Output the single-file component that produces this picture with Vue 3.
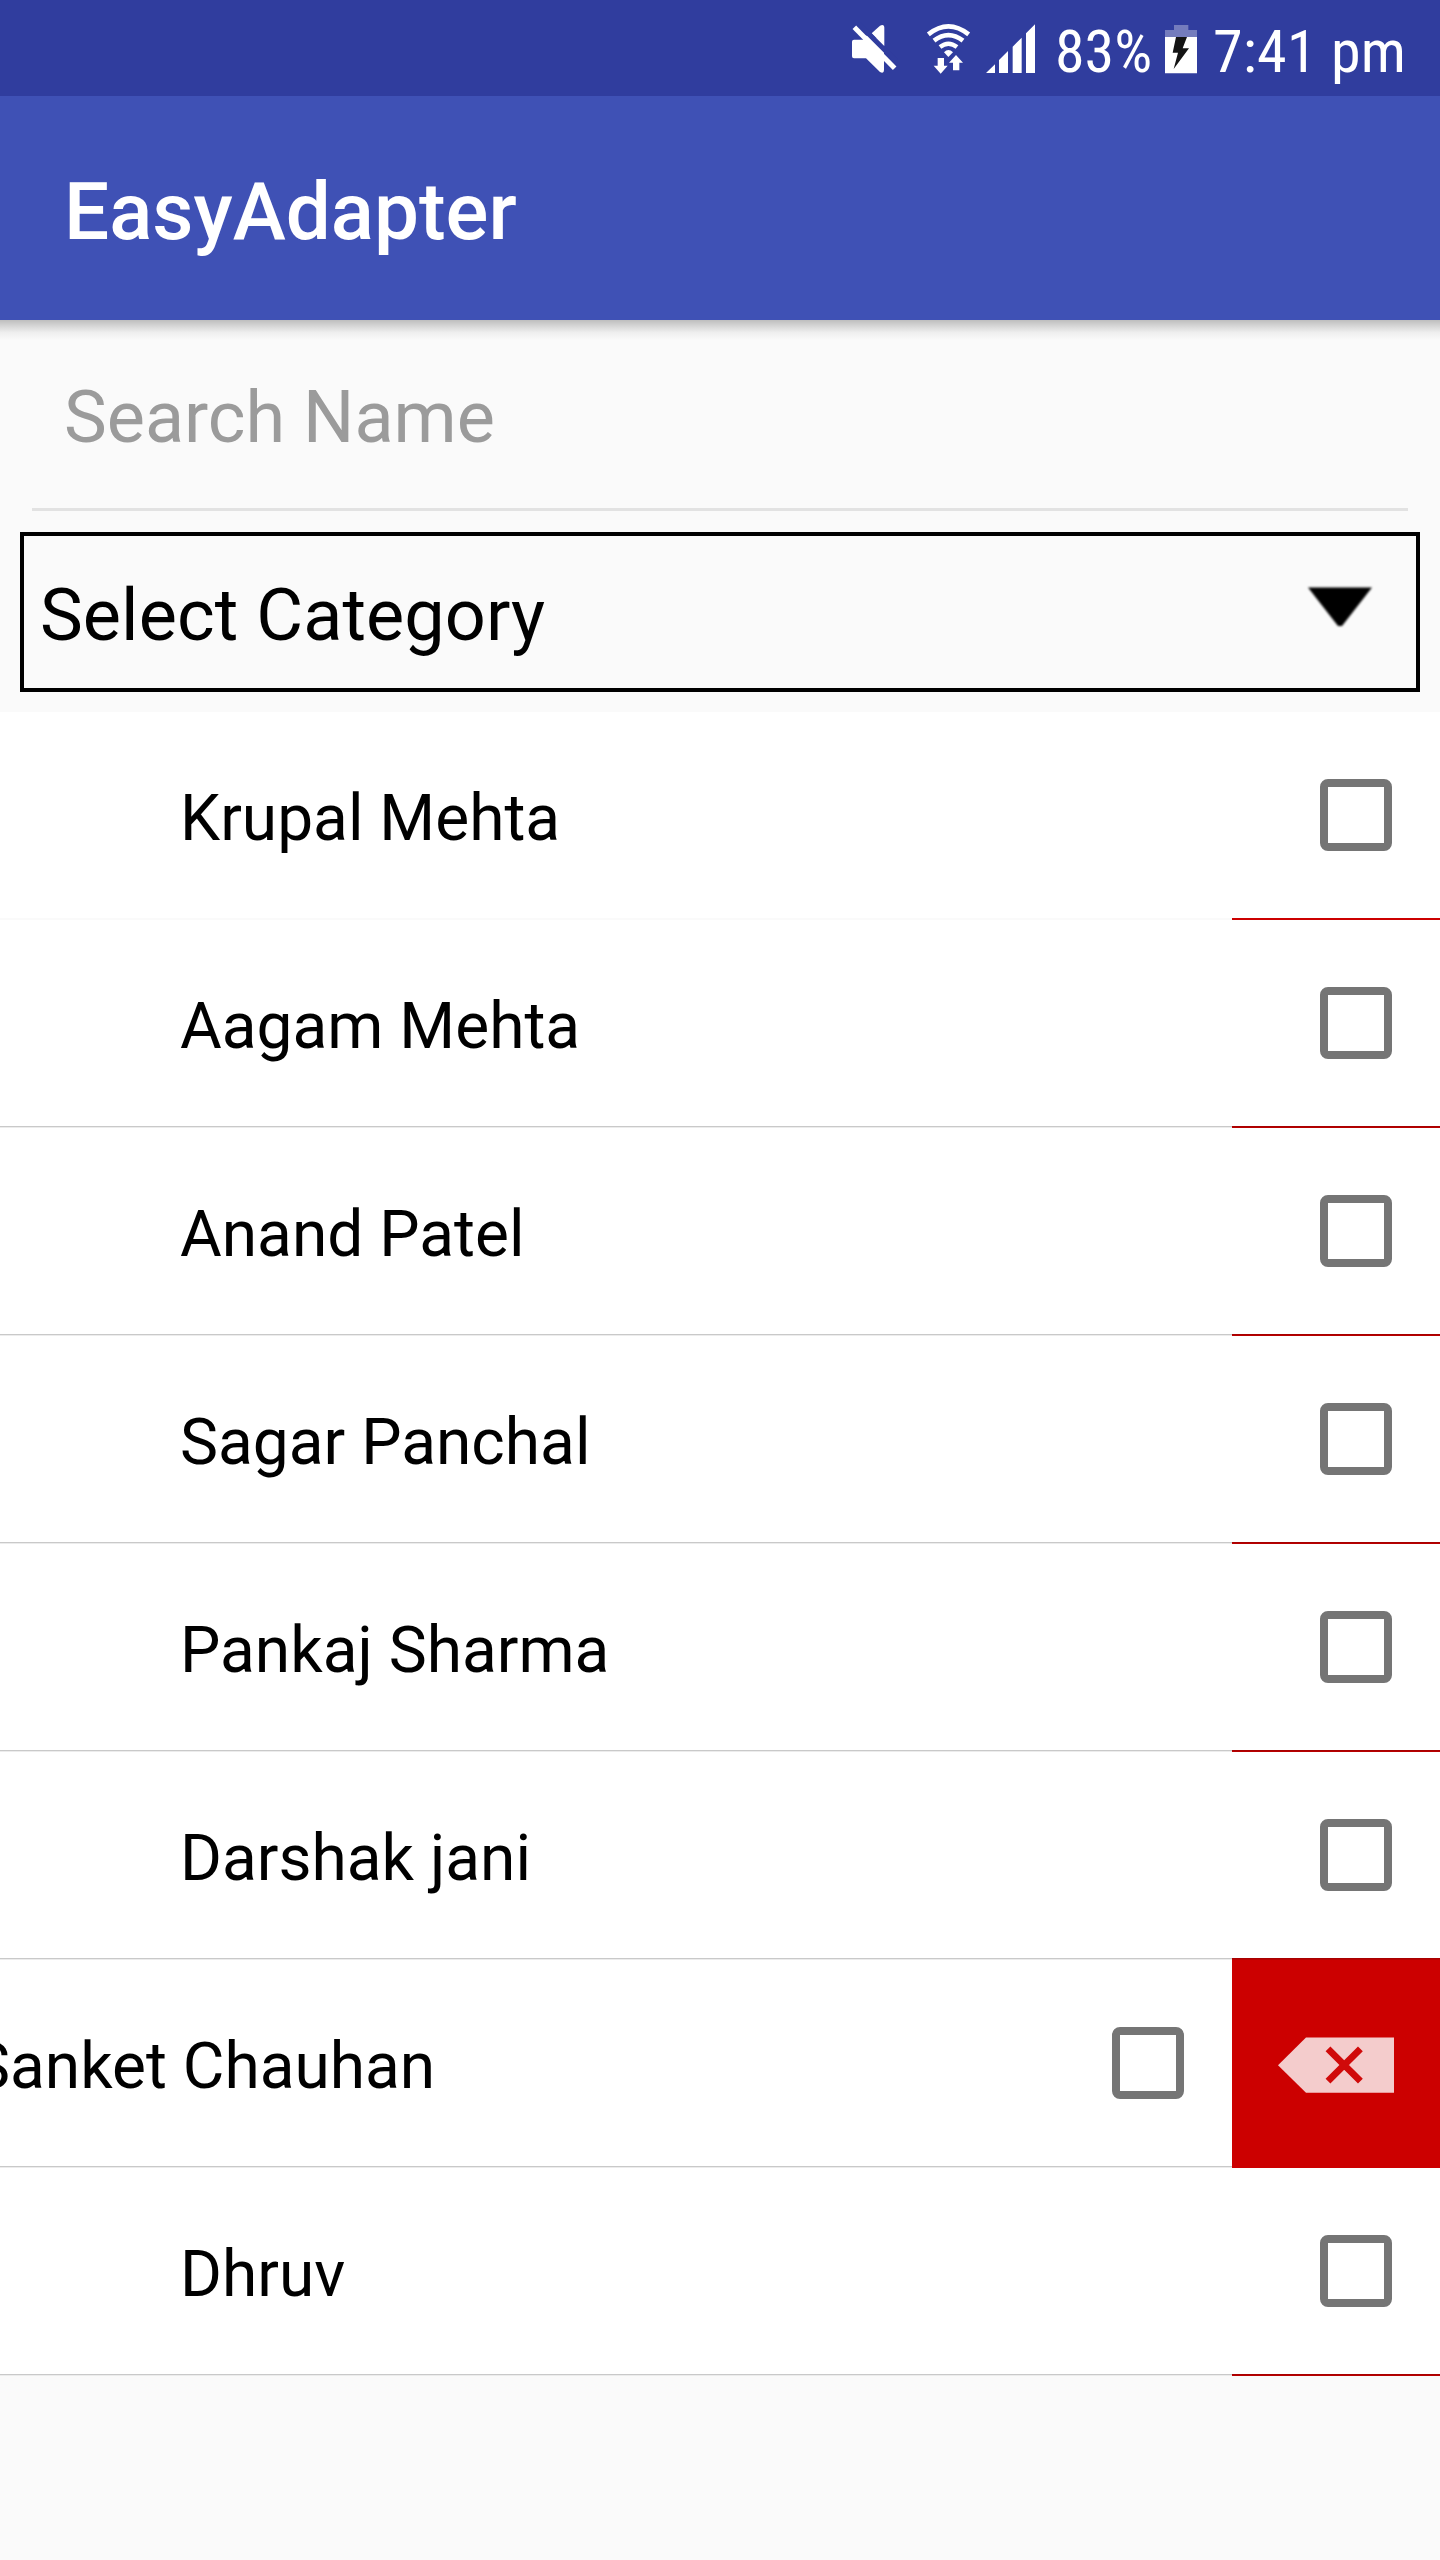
<script setup>
const people = [
  { name: 'Krupal Mehta' },
  { name: 'Aagam Mehta' },
  { name: 'Anand Patel' },
  { name: 'Sagar Panchal' },
  { name: 'Pankaj Sharma' },
  { name: 'Darshak jani' },
  { name: 'Sanket Chauhan', open: true },
  { name: 'Dhruv' },
]
</script>

<template>
  <div class="screen">
    <div class="status">
      <svg class="mute" viewBox="60 66 144 159" fill="#fff">
        <path d="M72 119 Q66 119 66 125 V169 Q66 175 72 175 H108 L150 216 Q162 222 162 210 V119 L100 105 V119 Z" />
        <path d="M125 100 L150 77 Q163 71 163 84 V138 Z" />
        <path d="M70 72 L204 206" stroke="#303d9e" stroke-width="15" transform="translate(8 -8)" />
        <path d="M73 82 L194 205" stroke="#fff" stroke-width="15" />
      </svg>
      <svg class="wifi" viewBox="288 66 135 159" fill="none" stroke="#fff">
        <path d="M295 103 Q355 55 416 103" stroke-width="14" />
        <path d="M312 122 Q355 89 399 122" stroke-width="14" />
        <path d="M330 141 Q355 121 381 141" stroke-width="13" />
        <path d="M342 157 Q355 143 369 157 L355 171 Z" fill="#fff" stroke="none" />
        <path d="M323 174 H342 V197 H353 L332 221 L311 197 H323 Z" fill="#fff" stroke="none" />
        <path d="M378 165 L399 188 H388 V211 H369 V188 H357 Z" fill="#fff" stroke="none" />
      </svg>
      <svg class="signal" viewBox="465 66 153 159" fill="#fff">
        <path d="M468 219 L495 193 V219 Z M507 219 V180 L534 153 V219 Z M548 219 V140 L575 113 V219 Z M588 219 V100 L615 73 V219 Z" />
      </svg>
      <span class="pct">83%</span>
      <svg class="battery" viewBox="102 66 102 159">
        <path d="M105 111 V90 H132 V75 H175 V90 H201 V111 Z" fill="#747cbd" />
        <path d="M105 111 H201 V220 H105 Z" fill="#fff" />
        <path d="M138 111 H171 L158 145 H177 L131 207 L144 158 H128 Z" fill="#141414" />
      </svg>
      <span class="time">7:41 pm</span>
    </div>
    <header class="appbar"><h1>EasyAdapter</h1></header>
    <div class="search"><span>Search Name</span></div>
    <div class="select">
      <span>Select Category</span>
      <svg class="arrow" viewBox="0 0 68 44"><path d="M2 2.5 H66 L36 41 H32 Z" /></svg>
    </div>
    <ul class="list">
      <li v-for="p in people" :key="p.name" class="row" :class="{ open: p.open }">
        <div class="front">
          <span class="name">{{ p.name }}</span>
          <i class="check"></i>
        </div>
        <div class="delete">
          <svg v-if="p.open" viewBox="0 0 120 60">
            <path d="M2 30.2 L30 2.5 H118 V57.7 H30 Z" fill="#f4cccc" />
            <path d="M52 13.8 L84.4 46.2 M84.4 13.8 L52 46.2" stroke="#d00a0a" stroke-width="6.8" />
          </svg>
        </div>
      </li>
    </ul>
  </div>
</template>

<style>
body { margin: 0; background: #fafafa; }
</style>

<style scoped>
.screen {
  width: 1440px;
  height: 2560px;
  overflow: hidden;
  background: #fafafa;
  color: #000;
  font-family: Roboto, "Liberation Sans", sans-serif;
}
.status {
  box-sizing: border-box;
  height: 96px;
  padding-left: 850px;
  display: flex;
  background: #303d9e;
  color: #fff;
  white-space: nowrap;
}
.status svg { flex: none; height: 53px; margin-top: 22px; }
.mute { width: 48px; }
.wifi { width: 45px; margin-left: 28px; }
.signal { width: 51px; margin-left: 14px; }
.status .battery { width: 34px; margin-left: 10px; }
.pct, .time {
  flex: none;
  font-family: "Roboto Condensed", Roboto, sans-serif;
  font-stretch: 75%;
  font-size: 60px;
  line-height: 103px;
}
.pct { width: 99px; margin-left: 19px; }
.time { margin-left: 15px; letter-spacing: 0.25px; }
.appbar {
  position: relative;
  box-sizing: border-box;
  height: 224px;
  padding: 7px 0 0 64px;
  display: flex;
  align-items: center;
  background: #3f51b5;
}
.appbar::after {
  content: "";
  position: absolute;
  left: 0;
  right: 0;
  top: 100%;
  height: 20px;
  background: linear-gradient(#bebebe, #d6d6d6 30%, #eee 62%, #fafafa);
}
h1 { margin: 0; font-size: 80px; font-weight: 500; line-height: 94px; color: #fff; }
.search {
  box-sizing: border-box;
  height: 191px;
  margin: 0 32px;
  padding: 7px 0 0 32px;
  display: flex;
  align-items: center;
  border-bottom: 3px solid #e2e2e2;
  font-size: 72px;
  color: #9b9b9b;
}
.select {
  box-sizing: border-box;
  height: 160px;
  margin: 21px 20px 20px;
  padding: 7px 42px 0 16px;
  display: flex;
  align-items: center;
  justify-content: space-between;
  border: 4px solid #000;
  font-size: 72px;
  letter-spacing: 0.08px;
}
.arrow { width: 68px; height: 44px; margin-top: -17px; filter: blur(.8px); }
.list { margin: 0; padding: 0; list-style: none; }
.row { display: flex; height: 208px; background: linear-gradient(#c9c9c9 50%, #ececec 50%) 0 206px / 100% 2px no-repeat; }
.front {
  flex: none;
  box-sizing: border-box;
  width: 1440px;
  height: 206px;
  padding: 0 48px 0 180px;
  display: flex;
  align-items: center;
  justify-content: space-between;
  background: #fff;
}
.name { padding-top: 8px; font-size: 64px; line-height: 76px; white-space: nowrap; }
.check { box-sizing: border-box; width: 72px; height: 72px; border: 8px solid #757575; border-radius: 8px; }
.delete {
  flex: none;
  width: 208px;
  height: 208px;
  margin-left: -208px;
  background: linear-gradient(#a80000 50%, #b80000 50%) 0 206px / 100% 2px no-repeat;
  display: flex;
  align-items: center;
  justify-content: center;
}
.row:first-child { background: #fafafa; }
.row:first-child .delete { background: linear-gradient(#c00, #c00) 0 206px / 100% 2px no-repeat; }
.open .front { margin-left: -208px; }
.open .delete { height: 210px; margin: -2px 0 0; background: linear-gradient(#a80000 1px, #b80000 1px, #b80000 2px, #c00 2px); }
.open svg { width: 120px; height: 60px; margin-top: 4px; }
</style>
